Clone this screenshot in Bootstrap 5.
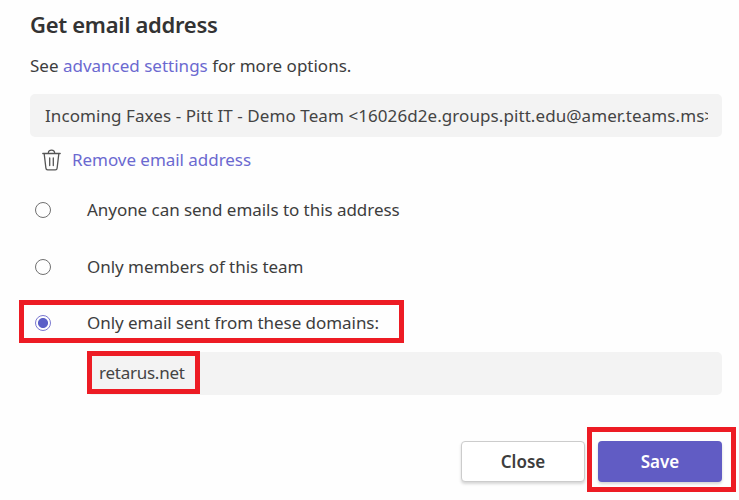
<!DOCTYPE html>
<html lang="en">
<head>
<meta charset="utf-8">
<meta name="viewport" content="width=device-width, initial-scale=1">
<title>Get email address</title>
<link href="https://cdn.jsdelivr.net/npm/bootstrap@5.3.0/dist/css/bootstrap.min.css" rel="stylesheet">
<style>
body{font-family:"Noto Sans",sans-serif;font-size:17px;line-height:24px;color:#3d3d3d;background:#fefefe}
.dialog{height:500px;padding:9px 18px 0 30px;white-space:nowrap}
.dialog-title{font-size:22px;font-weight:600;line-height:30px;margin:0 0 15px;color:#333;letter-spacing:-.3px}
.link-brand{color:#6b69d0;text-decoration:none}
.field{height:43px;background:#f3f3f3;border-radius:5px;width:692px;color:#444}
.address{padding:0 14px 0 15px;margin-top:16px;letter-spacing:.075px}
.remove{height:24px;margin:11px 0 0 12px;gap:11px;letter-spacing:-.04px}
.choice{height:24px;padding-left:5px;gap:36px;letter-spacing:-.045px}
.choice-first{margin-top:26px}
.choice-next{margin-top:33px}
.choice-last{margin-top:32px}
.choice .form-check-input{width:16px;height:16px;margin:0;border:1px solid #707070;background:#fefefe;flex:none}
.choice .form-check-input:checked{border-color:#7a78d0;background:radial-gradient(circle,#5b5fc7 4.6px,#fefefe 5.4px)}
.domain{width:635px;margin:17px 0 0 57px;padding:0 0 2px 12px;letter-spacing:-.25px}
.actions{width:692px;margin-top:46px;gap:13px}
.action{width:124px;height:41px;padding:0;border-radius:4px;font-size:17px;font-weight:600;box-shadow:0 2px 3px rgba(0,0,0,.16)}
.action-close{border:1px solid #ccc;background:#fff;color:#3d3d3d}
.action-save,.action-save:hover{border:0;background:#615cc4;color:#fff}
.marker{border:5px solid #ed1c24;pointer-events:none}
.marker-choice{left:-11px;top:-11px;width:385px;height:43px}
.marker-domain{left:0;top:-1px;width:113px;height:43px}
.marker-save{left:-11px;top:-14px;width:149px;height:65px}
</style>
</head>
<body>
<main class="dialog overflow-hidden">
  <h1 class="dialog-title">Get email address</h1>
  <p class="mb-0">See <a class="link-brand" href="#">advanced settings</a> for more options.</p>
  <div class="field address d-flex align-items-center"><div class="overflow-hidden w-100">Incoming Faxes - Pitt IT - Demo Team &lt;16026d2e.groups.pitt.edu@amer.teams.ms&gt;</div></div>
  <div class="remove d-flex align-items-center">
    <svg width="19" height="22" viewBox="0 0 19 22" fill="none" stroke="#555" stroke-width="1.3" stroke-linecap="round"><path d="M.8 4.500h17.400M6.300 4.200c0-4.200 6.400-4.200 6.400 0M2.200 4.800l1.700 14.400c.1 1 .7 1.600 1.700 1.600h7.800c1 0 1.600-.6 1.700-1.600L16.800 4.800M7.700 9v7.500M11.300 9v7.500"/></svg>
    <a class="link-brand" href="#">Remove email address</a>
  </div>
  <div class="choice choice-first d-flex align-items-center"><input class="form-check-input" type="radio" name="who" id="r1"><label for="r1">Anyone can send emails to this address</label></div>
  <div class="choice choice-next d-flex align-items-center"><input class="form-check-input" type="radio" name="who" id="r2"><label for="r2">Only members of this team</label></div>
  <div class="choice choice-last position-relative d-flex align-items-center"><input class="form-check-input" type="radio" name="who" id="r3" checked><label for="r3">Only email sent from these domains:</label><span class="marker marker-choice position-absolute"></span></div>
  <div class="field domain position-relative d-flex align-items-center">retarus.net<span class="marker marker-domain position-absolute"></span></div>
  <div class="actions d-flex justify-content-end">
    <button class="btn action action-close" type="button">Close</button>
    <div class="position-relative"><button class="btn action action-save" type="button">Save</button><span class="marker marker-save position-absolute"></span></div>
  </div>
</main>
<script src="https://cdn.jsdelivr.net/npm/bootstrap@5.3.0/dist/js/bootstrap.bundle.min.js"></script>
</body>
</html>
